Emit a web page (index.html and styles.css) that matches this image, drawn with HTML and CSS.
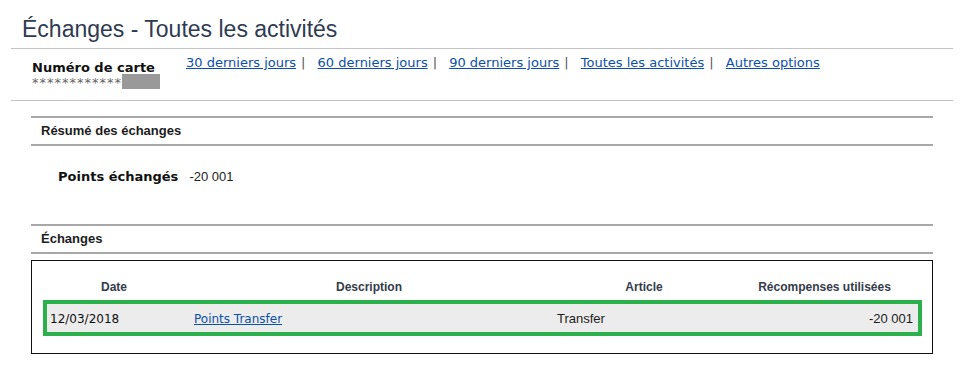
FILE: index.html
```html
<!DOCTYPE html>
<html lang="fr">
<head>
  <meta charset="UTF-8">
  <meta name="viewport" content="width=device-width, initial-scale=1.0">
  <title>Échanges - Toutes les activités</title>
  <link rel="stylesheet" href="styles.css">
</head>
<body>
  <div class="page">
    <h1 class="title">Échanges - Toutes les activités</h1>

    <div class="cardBar">
      <div class="card">
        <div class="cardLabel">Numéro de carte</div>
        <div class="cardNumber">************<span class="mask"></span></div>
      </div>
      <div class="periods">
        <a href="#">30 derniers jours</a><span class="sep">|</span>
        <a href="#">60 derniers jours</a><span class="sep">|</span>
        <a href="#">90 derniers jours</a><span class="sep">|</span>
        <a href="#">Toutes les activités</a><span class="sep">|</span>
        <a href="#">Autres options</a>
      </div>
    </div>

    <div class="content">
      <!-- Résumé -->
      <div class="section">
        <h3 class="sectionTitle">Résumé des échanges</h3>
        <div class="summary">
          <span class="summaryLabel">Points échangés</span>
          <span class="summaryValue">-20 001</span>
        </div>
      </div>

      <!-- Liste des échanges -->
      <div class="section">
        <h3 class="sectionTitle">Échanges</h3>
      </div>

      <div class="tableBox">
        <div class="tRow tHead">
          <div class="cell center">Date</div>
          <div class="cell center">Description</div>
          <div class="cell center">Article</div>
          <div class="cell center">Récompenses utilisées</div>
        </div>
        <div class="tRow tData">
          <div class="cell date">12/03/2018</div>
          <div class="cell desc"><a href="#">Points Transfer</a></div>
          <div class="cell item">Transfer</div>
          <div class="cell amount">-20 001</div>
        </div>
      </div>
    </div>
  </div>
</body>
</html>
```

FILE: styles.css
```css
* {
  margin: 0;
  padding: 0;
  box-sizing: border-box;
}

body {
  font-family: 'DejaVu Sans', Verdana, sans-serif;
  font-size: 13px;
  color: #222;
  background: #fff;
}

a {
  color: #0b4fa8;
}

.page {
  padding: 0 10px 0 11px;
}

.title {
  font-family: 'Liberation Sans', Arial, sans-serif;
  font-size: 23px;
  font-weight: normal;
  line-height: 26px;
  color: #2e3b52;
  margin-top: 16px;
  padding: 0 0 6px 11px;
  border-bottom: 1px solid #c3c3c3;
}

.cardBar {
  display: flex;
  padding: 6px 0 10px 21px;
  border-bottom: 1px solid #c3c3c3;
}

.card {
  width: 154px;
  padding-top: 5px;
  line-height: 15px;
}

.cardLabel {
  font-weight: bold;
  color: #111;
}

.cardNumber {
  display: flex;
  align-items: flex-start;
  color: #666;
  letter-spacing: 1px;
  height: 15px;
}

.mask {
  display: inline-block;
  width: 38px;
  height: 15px;
  margin-top: -1px;
  background: #999;
}

.periods {
  line-height: 15px;
}

.sep {
  color: #555;
  margin: 0 8px 0 5px;
}

.content {
  padding: 15px 20px 0 20px;
}

.section {
  border-top: 2px solid #a8a8a8;
}

.sectionTitle {
  font-family: 'Liberation Sans', Arial, sans-serif;
  font-size: 13px;
  line-height: 26px;
  color: #1c1c1c;
  padding-left: 10px;
  border-bottom: 2px solid #a8a8a8;
}

.summary {
  padding: 22px 0 38px 27px;
  line-height: 18px;
}

.summaryLabel {
  font-weight: bold;
  color: #111;
  margin-right: 7px;
}

.summaryValue {
  font-family: 'Liberation Sans', Arial, sans-serif;
  color: #222;
}

.tableBox {
  margin-top: 6px;
  border: 1px solid #111;
  padding: 0 10px 17px 11px;
}

.tRow {
  display: grid;
  grid-template-columns: 134px 376px 174px 187px;
  border: 4px solid transparent;
}

.tHead {
  border-bottom: 0;
  border-top: 0;
  padding: 19px 0 5px;
  font-family: 'Liberation Sans', Arial, sans-serif;
  font-weight: bold;
  font-size: 12px;
  line-height: 15px;
  color: #343c4c;
}

.tData {
  border-color: #2bb04b;
  background: #ececec;
  font-size: 12px;
  line-height: 16px;
  padding: 7px 0 5px;
}

.center {
  text-align: center;
}

.date {
  padding-left: 3px;
  color: #111;
}

.desc {
  padding-left: 13px;
}

.item, .amount {
  font-family: 'Liberation Sans', Arial, sans-serif;
  font-size: 13px;
  color: #1c1c1c;
}

.amount {
  text-align: right;
  padding-right: 5px;
}
```
